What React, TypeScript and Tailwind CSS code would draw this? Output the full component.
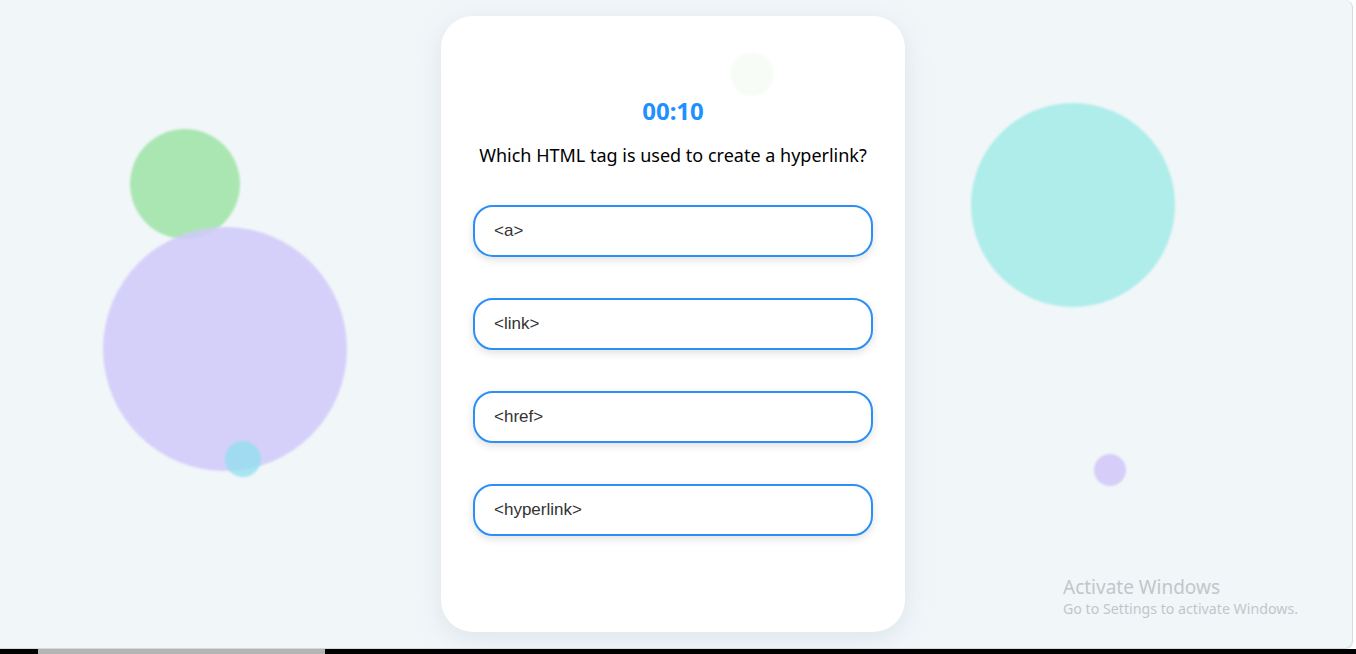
import React from "react";

const options = ["<a>", "<link>", "<href>", "<hyperlink>"];

export default function App() {
  return (
    <div className="w-[1356px] h-[654px] flex flex-col bg-white overflow-hidden">
      <div className="relative h-[649px] w-[1353px] bg-[#f1f6f9] border-r border-b border-[#d6dadd] rounded-r-[8px] overflow-hidden">
        {/* floating bubbles */}
        <div className="absolute left-[130px] top-[129px] w-[110px] h-[110px] rounded-full bg-[#a3e5ab] opacity-90 blur-[1px]" />
        <div className="absolute left-[103px] top-[227px] w-[244px] h-[244px] rounded-full bg-[#d1cafa] opacity-85 blur-[1px]" />
        <div className="absolute left-[225px] top-[441px] w-[36px] h-[36px] rounded-full bg-[#90dff0] opacity-75 blur-[1px]" />
        <div className="absolute left-[971px] top-[103px] w-[204px] h-[204px] rounded-full bg-[#abede9] opacity-95 blur-[1px]" />
        <div className="absolute left-[1094px] top-[454px] w-[32px] h-[32px] rounded-full bg-[#d5cbf8] opacity-95 blur-[1px]" />

        <div className="absolute left-[441px] top-[16px] w-[464px] h-[616px] bg-white rounded-[32px] shadow-[0_6px_24px_rgba(160,180,200,0.25)] flex flex-col items-center px-8 pt-[79px]">
          <div className="absolute left-[289px] top-[36px] w-[44px] h-[44px] rounded-full bg-[#f7fdf6] blur-[1px]" />
          <div className="text-[24px] leading-[32px] font-bold text-[#1e90ff] [font-family:'Noto_Sans',sans-serif]">
            00:10
          </div>
          <div className="mt-[16px] text-[18px] leading-[24px] text-black [font-family:'Noto_Sans',sans-serif]">
            Which HTML tag is used to create a hyperlink?
          </div>
          <div className="mt-[38px] w-full flex flex-col gap-[41px]">
            {options.map((o) => (
              <button
                key={o}
                className="w-full h-[52px] text-left pl-[19px] border-2 border-[#2b8ff5] rounded-[20px] bg-white text-[17px] text-[#333] shadow-[0_3px_8px_rgba(0,0,0,0.12)] [font-family:'Liberation_Sans',Arial,sans-serif]"
              >
                {o}
              </button>
            ))}
          </div>
        </div>

        <div className="absolute left-[1063px] top-[575px] text-[#c3c6c9] [font-family:'Noto_Sans',sans-serif]">
          <div className="text-[19px] leading-[24px]">Activate Windows</div>
          <div className="text-[14.2px] leading-[20px]">Go to Settings to activate Windows.</div>
        </div>
      </div>
      <div className="flex-1 flex">
        <div className="w-[38px] bg-black" />
        <div className="w-[287px] bg-[#b4b4b4]" />
        <div className="flex-1 bg-black" />
      </div>
    </div>
  );
}
